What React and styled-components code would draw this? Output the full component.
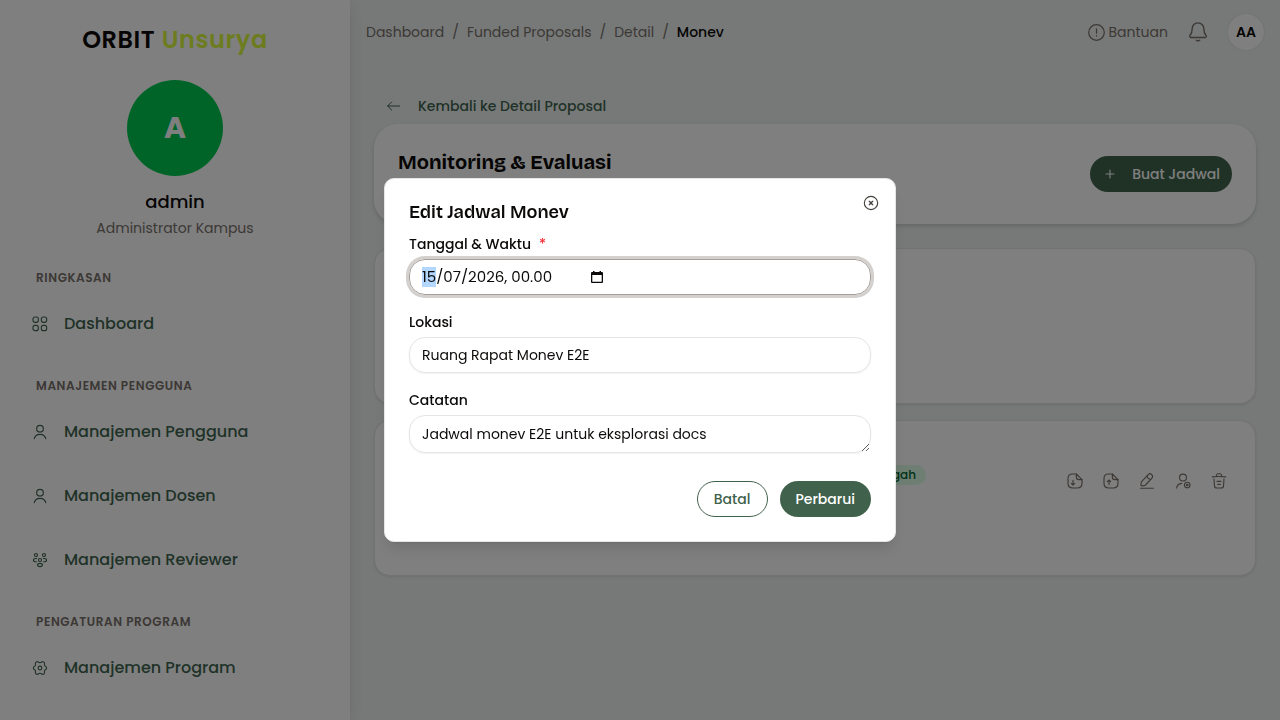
import { useEffect, useRef } from "react";
import styled, { createGlobalStyle } from "styled-components";

const GlobalStyle = createGlobalStyle`
  * {
    box-sizing: border-box;
  }
  body {
    margin: 0;
    font-family: Poppins, Inter, "Open Sans", sans-serif;
    font-size: 14px;
    line-height: 20px;
    color: #0c0a09;
    background-color: #eef3f1;
    overflow: hidden;
  }
  h1, h2, p {
    margin: 0;
  }
  button, input, textarea {
    font: inherit;
    color: inherit;
  }
  a {
    color: inherit;
    text-decoration: none;
  }
  svg {
    flex-shrink: 0;
  }
`;

const Layout = styled.div`
  display: flex;
  height: 100vh;
  overflow: hidden;
`;

const Sidebar = styled.aside`
  width: 350px;
  flex-shrink: 0;
  padding-top: 24px;
  background-color: white;
  box-shadow: 0 4px 16px rgba(0, 0, 0, 0.1);
  overflow: hidden;
  z-index: 1;
`;

const Logo = styled.p`
  font-size: 24px;
  line-height: 32px;
  font-weight: 600;
  text-align: center;
  letter-spacing: 0.025em;
  span {
    color: #d8f83c;
  }
`;

const Profile = styled.div`
  display: flex;
  flex-direction: column;
  align-items: center;
  padding: 24px 0 8px;
`;

const ProfileAvatar = styled.div`
  width: 96px;
  height: 96px;
  margin-bottom: 12px;
  border-radius: 50%;
  background-color: #00c950;
  color: white;
  font-size: 30px;
  font-weight: 700;
  display: flex;
  align-items: center;
  justify-content: center;
`;

const ProfileName = styled.p`
  font-size: 18px;
  line-height: 28px;
  font-weight: 500;
`;

const ProfileRole = styled.p`
  line-height: 24px;
  color: #79716b;
`;

const NavTitle = styled.p`
  padding: 20px 36px 4px;
  font-size: 12px;
  font-weight: 600;
  letter-spacing: 0.05em;
  color: #79716b;
`;

const NavItem = styled.a`
  display: flex;
  align-items: center;
  gap: 16px;
  height: 64px;
  padding: 0 32px;
  font-size: 16px;
  font-weight: 500;
  color: #3f644f;
`;

const Main = styled.main`
  flex: 1;
  min-width: 0;
  background-color: #eef3f1;
`;

const TopBar = styled.header`
  display: flex;
  align-items: center;
  justify-content: space-between;
  height: 64px;
  padding: 0 16px;
  color: #79716b;
`;

const Breadcrumb = styled.nav`
  display: flex;
  gap: 8px;
  b {
    font-weight: 500;
    color: #0c0a09;
  }
`;

const TopActions = styled.div`
  display: flex;
  align-items: center;
  gap: 20px;
`;

const PlainButton = styled.button`
  display: flex;
  align-items: center;
  justify-content: center;
  gap: 4px;
  padding: 0;
  border: none;
  background: none;
  cursor: pointer;
`;

const UserButton = styled(PlainButton)`
  width: 36px;
  height: 36px;
  border-radius: 50%;
  background-color: white;
  box-shadow: 0 0 2px rgba(0, 0, 0, 0.15);
  font-weight: 600;
  color: #0c0a09;
`;

const Content = styled.div`
  display: flex;
  flex-direction: column;
  padding: 24px;
`;

const BackLink = styled.a`
  display: flex;
  align-items: center;
  gap: 16px;
  height: 36px;
  padding: 0 12px;
  font-weight: 500;
  color: #3f644f;
`;

const HeaderCard = styled.section`
  display: flex;
  justify-content: space-between;
  align-items: center;
  min-height: 100px;
  margin-bottom: 24px;
  padding: 24px;
  border-radius: 24px;
  background-color: white;
  box-shadow: 0 2px 5px rgba(0, 0, 0, 0.16);
`;

const PageTitle = styled.h1`
  align-self: flex-start;
  font-family: "Bricolage Grotesque", Inter, sans-serif;
  font-size: 20px;
  line-height: 28px;
  font-weight: 700;
`;

const Button = styled.button`
  display: flex;
  align-items: center;
  justify-content: center;
  gap: 14px;
  height: 36px;
  padding: 0 ${(props) => (props.$compact ? "12px" : "16px")};
  border: ${(props) => (props.$outline ? "1px solid #40624c" : "none")};
  border-radius: 18px;
  background-color: ${(props) => (props.$outline ? "white" : "#40624c")};
  color: ${(props) => (props.$outline ? "#40624c" : "white")};
  font-weight: 500;
  cursor: pointer;
`;

const Card = styled.section`
  min-height: 156px;
  margin-bottom: 16px;
  padding: 44px 24px 24px;
  border: 1px solid #e7e5e4;
  border-radius: 16px;
  background-color: white;
  box-shadow: 0 1px 3px rgba(0, 0, 0, 0.1);
`;

const ScheduleRow = styled.div`
  display: grid;
  grid-template-columns: 1fr 305px;
  align-items: start;
`;

const Badge = styled.span`
  justify-self: end;
  padding: 0 10px;
  border-radius: 10px;
  background-color: #dcfce7;
  color: #016630;
  font-size: 12px;
  font-weight: 500;
`;

const RowActions = styled.div`
  display: flex;
  justify-content: flex-end;
  gap: 12px;
  padding-top: 4px;
  color: #79716b;
  button {
    width: 24px;
    height: 24px;
  }
`;

const Overlay = styled.div`
  position: fixed;
  inset: 0;
  z-index: 2;
  display: flex;
  align-items: center;
  justify-content: center;
  background-color: rgba(0, 0, 0, 0.5);
`;

const Dialog = styled.div`
  width: 100%;
  max-width: 512px;
  padding: 24px;
  border: 1px solid #e7e5e4;
  border-radius: 10px;
  background-color: white;
  box-shadow: 0 10px 15px -3px rgba(0, 0, 0, 0.1),
    0 4px 6px -4px rgba(0, 0, 0, 0.1);
`;

const DialogHeader = styled.div`
  display: flex;
  justify-content: space-between;
  align-items: flex-start;
  height: 18px;
  margin: 0 -8px 14px 0;
`;

const DialogTitle = styled.h2`
  font-family: "Bricolage Grotesque", Inter, sans-serif;
  font-size: 18px;
  line-height: 18px;
  font-weight: 600;
`;

const CloseButton = styled(PlainButton)`
  height: 0;
  color: #44403b;
`;

const Field = styled.div`
  display: flex;
  flex-direction: column;
  gap: 6px;
  margin-bottom: 18px;
`;

const Label = styled.label`
  display: flex;
  gap: 8px;
  line-height: 18px;
  font-weight: 500;
  span {
    color: #fb2c36;
  }
`;

const Input = styled.input`
  height: 36px;
  padding: 0 12px;
  border: 1px solid #e7e5e4;
  border-radius: 16px;
  background-color: white;
  box-shadow: 0 1px 2px rgba(0, 0, 0, 0.05);
  outline: none;
`;

const DateBox = styled.div`
  display: flex;
  align-items: center;
  height: 36px;
  padding: 0 12px;
  border: 1px solid #a6a09b;
  border-radius: 16px;
  box-shadow: 0 0 0 3px #d3d0ce;
`;

const DateInput = styled.input`
  width: 168px;
  padding: 0;
  border: none;
  outline: none;
  background: none;
  font-size: 15px;
  &::selection {
    background-color: #b3d7ff;
  }
`;

const TextArea = styled.textarea`
  height: 38px;
  padding: 8px 12px;
  border: 1px solid #e7e5e4;
  border-radius: 16px;
  background-color: white;
  box-shadow: 0 1px 2px rgba(0, 0, 0, 0.05);
  outline: none;
  resize: vertical;
  overflow: hidden;
`;

const DialogFooter = styled.div`
  display: flex;
  justify-content: flex-end;
  gap: 12px;
  padding-top: 10px;
`;

const Icon = ({ size = 16, weight = 1.7, children }) => (
  <svg
    width={size}
    height={size}
    viewBox="0 0 24 24"
    fill="none"
    stroke="currentColor"
    strokeWidth={weight}
    strokeLinecap="round"
    strokeLinejoin="round"
    aria-hidden="true"
  >
    {children}
  </svg>
);

const GridIcon = () => (
  <Icon>
    <rect x="1.5" y="1.5" width="8" height="8" rx="3" />
    <rect x="14" y="1.5" width="8" height="8" rx="3" />
    <rect x="1.5" y="14" width="8" height="8" rx="3" />
    <rect x="14" y="14" width="8" height="8" rx="3" />
  </Icon>
);

const UserIcon = () => (
  <Icon>
    <circle cx="12" cy="7" r="5" />
    <path d="M3.4 22c.8-3.800 4.200-6.500 8.600-6.500s7.800 2.700 8.600 6.500" />
  </Icon>
);

const TeamIcon = () => (
  <Icon>
    <circle cx="6" cy="4.500" r="2.300" />
    <circle cx="18" cy="4.500" r="2.300" />
    <circle cx="12" cy="12" r="2.300" />
    <ellipse cx="12" cy="19.500" rx="3.600" ry="2.400" />
    <path d="M7 9.800H5.500c-2 0-3.300.9-3.300 2.400s1.300 2.400 3.300 2.400h1.200" />
    <path d="M17 9.800h1.500c2 0 3.300.9 3.300 2.400s-1.300 2.400-3.300 2.400h-1.200" />
  </Icon>
);

const GearIcon = () => (
  <Icon weight={1.8}>
    <g transform="translate(0.8 0.8) scale(0.93)">
      <circle cx="12" cy="12" r="3" />
      <path d="M9 2.200c-1.200-1-3.200-.3-4 1-1 1.700.4 3.200-.5 4.700-.9 1.400-3.200 1.300-3.200 4.100s2.300 2.700 3.200 4.100c.9 1.500-.5 3 .5 4.700.8 1.300 2.800 2 4 1 1-.8 1.500-1.300 3-1.300s2 .5 3 1.300c1.200 1 3.200.3 4-1 1-1.700-.4-3.200.5-4.700.9-1.400 3.200-1.300 3.200-4.100s-2.300-2.700-3.200-4.100c-.9-1.500.5-3-.5-4.700-.8-1.300-2.800-2-4-1-1 .8-1.500 1.300-3 1.300s-2-.5-3-1.300z" />
    </g>
  </Icon>
);

const FileIcon = ({ up }) => (
  <Icon>
    <path d="M14 1.500H8.500c-5 0-7 2-7 7v7c0 5 2 7 7 7h7c5 0 7-2 7-7V10" />
    <path d="M14 1.500v4.500c0 3 1 4 4 4h4.500L14 1.500z" />
    <path
      d={
        up
          ? "M9 17.500V11M6.500 13 9 10.500 11.500 13"
          : "M9 11v6.500M6.500 15.500 9 18l2.500-2.500"
      }
    />
  </Icon>
);

const EditIcon = () => (
  <Icon>
    <path d="M13.500 2.800 4.200 12.600c-.4.400-.7 1.200-.8 1.700L3 17.600c-.1 1.200.7 2 1.900 1.800l3.300-.6c.5-.1 1.200-.4 1.500-.8L19 8.200c1.600-1.700 2.300-3.600-.2-6-2.400-2.300-3.700-1.100-5.300.6z" />
    <path d="M12 4.500c.5 3 2.800 5 5.600 5.300" />
    <path d="M2.500 22.800h19" />
  </Icon>
);

const ReviewerIcon = () => (
  <Icon>
    <circle cx="12" cy="6.800" r="5.200" />
    <path d="M2.500 22.500c.5-4 3.200-6.500 7.500-7" />
    <circle cx="18.300" cy="18" r="4.200" />
    <circle cx="18.300" cy="18" r="1.200" />
  </Icon>
);

const TrashIcon = () => (
  <Icon>
    <path d="M2 5.800c6.600-.7 13.300-.7 20 0" />
    <path d="m8 5 .4-2c.2-1.200.6-1.800 2.200-1.800h2.800c1.600 0 2 .7 2.200 1.800l.4 2" />
    <path d="m19.500 9-.7 10c-.1 2-.5 3.500-3.500 3.500H8.700c-3 0-3.400-1.500-3.500-3.500L4.500 9" />
    <path d="M9 12.500h6M10 17h4" />
  </Icon>
);

const menu = [
  { title: "RINGKASAN", items: [["Dashboard", GridIcon]] },
  {
    title: "MANAJEMEN PENGGUNA",
    items: [
      ["Manajemen Pengguna", UserIcon],
      ["Manajemen Dosen", UserIcon],
      ["Manajemen Reviewer", TeamIcon],
    ],
  },
  { title: "PENGATURAN PROGRAM", items: [["Manajemen Program", GearIcon]] },
];

const SideMenu = () => (
  <Sidebar>
    <Logo>
      ORBIT <span>Unsurya</span>
    </Logo>
    <Profile>
      <ProfileAvatar>A</ProfileAvatar>
      <ProfileName>admin</ProfileName>
      <ProfileRole>Administrator Kampus</ProfileRole>
    </Profile>
    <nav>
      {menu.map((group) => (
        <div key={group.title}>
          <NavTitle>{group.title}</NavTitle>
          {group.items.map(([name, ItemIcon]) => (
            <NavItem key={name} href="#">
              <ItemIcon />
              {name}
            </NavItem>
          ))}
        </div>
      ))}
    </nav>
  </Sidebar>
);

const EditDialog = () => {
  const dateRef = useRef(null);

  useEffect(() => {
    dateRef.current.focus();
    dateRef.current.setSelectionRange(0, 2);
  }, []);

  return (
    <Overlay>
      <Dialog role="dialog" aria-labelledby="dialog-title">
        <DialogHeader>
          <DialogTitle id="dialog-title">Edit Jadwal Monev</DialogTitle>
          <CloseButton aria-label="Tutup">
            <Icon>
              <circle cx="12" cy="12" r="10" />
              <path d="m9.500 9.500 5 5M14.500 9.500l-5 5" strokeWidth="2" />
            </Icon>
          </CloseButton>
        </DialogHeader>
        <form>
          <Field>
            <Label htmlFor="tanggal">
              Tanggal &amp; Waktu <span>*</span>
            </Label>
            <DateBox>
              <DateInput
                id="tanggal"
                ref={dateRef}
                type="text"
                defaultValue="15/07/2026, 00.00"
              />
              <PlainButton type="button" aria-label="Pilih tanggal">
                <svg width="14" height="14" viewBox="0 0 14 14">
                  <path
                    fill="currentColor"
                    fillRule="evenodd"
                    d="M3 1h1.500v1h5V1H11v1h1a1 1 0 0 1 1 1v9a1 1 0 0 1-1 1H2a1 1 0 0 1-1-1V3a1 1 0 0 1 1-1h1zM2.300 5v6.700h9.400V5z"
                  />
                </svg>
              </PlainButton>
            </DateBox>
          </Field>
          <Field>
            <Label htmlFor="lokasi">Lokasi</Label>
            <Input id="lokasi" type="text" defaultValue="Ruang Rapat Monev E2E" />
          </Field>
          <Field>
            <Label htmlFor="catatan">Catatan</Label>
            <TextArea
              id="catatan"
              defaultValue="Jadwal monev E2E untuk eksplorasi docs"
            />
          </Field>
          <DialogFooter>
            <Button type="button" $outline>
              Batal
            </Button>
            <Button type="button">Perbarui</Button>
          </DialogFooter>
        </form>
      </Dialog>
    </Overlay>
  );
};

export default function App() {
  return (
    <>
      <GlobalStyle />
      <Layout>
        <SideMenu />
        <Main>
          <TopBar>
            <Breadcrumb>
              <a href="#">Dashboard</a>
              <span>/</span>
              <a href="#">Funded Proposals</a>
              <span>/</span>
              <a href="#">Detail</a>
              <span>/</span>
              <b>Monev</b>
            </Breadcrumb>
            <TopActions>
              <PlainButton>
                <Icon size={17}>
                  <circle cx="12" cy="12" r="11" />
                  <path d="M12 7v6M12 16.500v.5" />
                </Icon>
                Bantuan
              </PlainButton>
              <PlainButton aria-label="Notifikasi">
                <Icon size={20}>
                  <path d="M5 8a7 7 0 0 1 14 0c0 5 1.500 7 2.600 8.200.8 1 .2 2.300-1 2.300H3.400c-1.200 0-1.800-1.300-1-2.300C3.500 15 5 13 5 8z" />
                  <path d="M10 22c1 1 3 1 4 0" />
                </Icon>
              </PlainButton>
              <UserButton>AA</UserButton>
            </TopActions>
          </TopBar>
          <Content>
            <BackLink href="#">
              <Icon weight={1.5}>
                <path d="M20.500 12h-18M8.500 6l-6 6 6 6" />
              </Icon>
              Kembali ke Detail Proposal
            </BackLink>
            <HeaderCard>
              <PageTitle>Monitoring &amp; Evaluasi</PageTitle>
              <Button $compact>
                <Icon>
                  <path d="M12 6v12M6 12h12" />
                </Icon>
                Buat Jadwal
              </Button>
            </HeaderCard>
            <Card />
            <Card>
              <ScheduleRow>
                <Badge>Tengah</Badge>
                <RowActions>
                  <PlainButton aria-label="Unduh berkas">
                    <FileIcon />
                  </PlainButton>
                  <PlainButton aria-label="Unggah berkas">
                    <FileIcon up />
                  </PlainButton>
                  <PlainButton aria-label="Edit">
                    <EditIcon />
                  </PlainButton>
                  <PlainButton aria-label="Atur reviewer">
                    <ReviewerIcon />
                  </PlainButton>
                  <PlainButton aria-label="Hapus">
                    <TrashIcon />
                  </PlainButton>
                </RowActions>
              </ScheduleRow>
            </Card>
          </Content>
        </Main>
      </Layout>
      <EditDialog />
    </>
  );
}
